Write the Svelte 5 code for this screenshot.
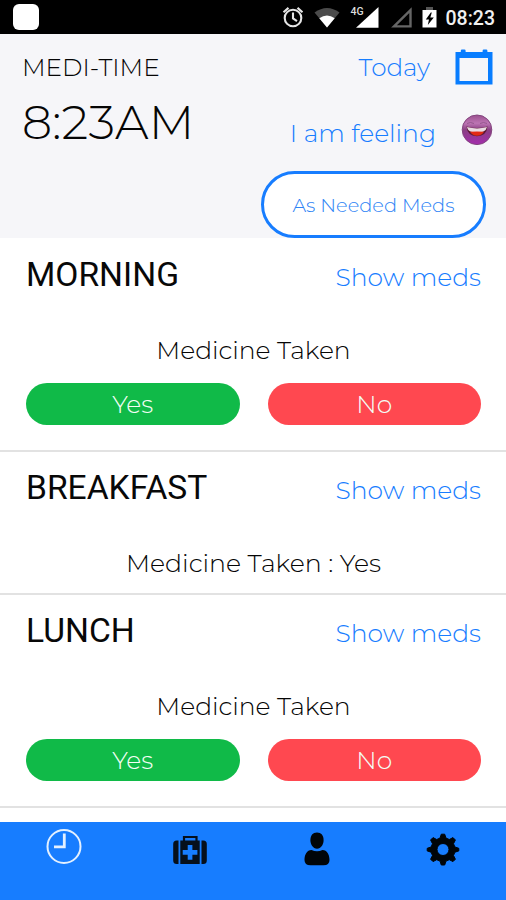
<script>
  const sections = [
    { name: 'MORNING', taken: null },
    { name: 'BREAKFAST', taken: 'Yes' },
    { name: 'LUNCH', taken: null }
  ];
</script>

<div class="screen">
  <div class="status">
    <span class="app-square"></span>
    <svg width="230" height="34" viewBox="276 0 230 34">
      <g fill="none" stroke="#e6e6e6" stroke-width="2.1">
        <circle cx="293" cy="18" r="8.3" />
        <path d="M293 12.5v6l4 2.6M283.5 12.2l5-4.3M302.5 12.2l-5-4.3" />
      </g>
      <path d="M314.5 12.5Q327 3.5 339.5 12.5L327 27.5Z" fill="#4b4b4b" />
      <path d="M319.3 18.3Q327 12.8 334.7 18.3L327 27.5Z" fill="#fff" />
      <text x="350.5" y="14.5" class="net">4G</text>
      <path d="M356 27.7L378.5 7V27.7Z" fill="#fff" />
      <path d="M394 26.4L410.5 10.2V26.4Z" fill="none" stroke="#666" stroke-width="2.4" />
      <path d="M426 7h7v3h-7z" fill="#555" />
      <path d="M422.5 10h14v17.5h-14z" fill="#fff" />
      <path d="M430.8 12.5l-5 7h3.2l-1.2 5.5 6-7.5h-3.5l1.5-5z" fill="#000" />
      <text x="445.5" y="25.3" class="clock" textLength="49.5" lengthAdjust="spacingAndGlyphs">08:23</text>
    </svg>
  </div>

  <header>
    <div class="now">
      <span class="title">MEDI-TIME</span>
      <span class="time">8:23AM</span>
    </div>
    <div class="actions">
      <div class="row">
        <span class="link today">Today</span>
        <svg width="38" height="36" viewBox="0 0 38 36">
          <path fill="#087dff" fill-rule="evenodd" d="M.5 3h5.3V1.700q0-1.200 1.200-1.200h2.400q1.200 0 1.200 1.200V3h17V1.700q0-1.200 1.200-1.200h2.400q1.200 0 1.200 1.200V3H37.5V35.500H.5V3ZM4.500 9V32H33V9Z" />
        </svg>
      </div>
      <div class="row feeling-row">
        <span class="link feeling">I am feeling</span>
        <svg width="32" height="32" viewBox="0 0 32 32">
          <defs>
            <linearGradient id="face" x1="0" y1="0" x2="0" y2="1">
              <stop offset="0" stop-color="#9b508f" />
              <stop offset=".28" stop-color="#bd75b4" />
              <stop offset=".5" stop-color="#8a3f83" />
              <stop offset="1" stop-color="#a42cae" />
            </linearGradient>
          </defs>
          <circle cx="16" cy="15.8" r="14.8" fill="url(#face)" stroke="#83457f" stroke-width="1" />
          <path d="M5.5 12.500Q16 15.500 26.500 12.500Q25.500 22 16 22.300Q6.500 22 5.500 12.500Z" fill="#5c1833" />
          <path d="M6 13Q16 15.800 26 13Q25.300 16.500 22 17.700Q16 18.800 10 17.700Q6.700 16.500 6 13Z" fill="#eadce3" />
          <path d="M9 17.800Q16 17 23 17.800Q20.500 21.700 16 21.700Q11.500 21.700 9 17.800Z" fill="#e32a14" />
          <path d="M6 9.500Q9.500 7.500 13 9.500M19 9.500Q22.500 7.500 26 9.500" fill="none" stroke="#96588f" stroke-width="1" />
        </svg>
      </div>
      <button class="needed"><span>As Needed Meds</span></button>
    </div>
  </header>

  <main>
    {#each sections as s}
      <section class:done={s.taken}>
        <div class="head">
          <h2>{s.name}</h2>
          <span class="link show">Show meds</span>
        </div>
        {#if s.taken}
          <p>Medicine Taken : {s.taken}</p>
        {:else}
          <p>Medicine Taken</p>
          <div class="choices">
            <button class="yes">Yes</button>
            <button class="no">No</button>
          </div>
        {/if}
      </section>
    {/each}
  </main>

  <nav>
    <div class="tab">
      <svg width="36" height="36" viewBox="0 0 36 36" fill="none" stroke="#e3f0ff">
        <circle cx="18" cy="17.500" r="16.500" stroke-width="2" />
        <path d="M18.300 4.500V17.800H8" stroke-width="2.800" />
      </svg>
    </div>
    <div class="tab low">
      <svg width="36" height="36" viewBox="0 0 36 36">
        <path d="M12 12V7h12.500V12" fill="none" stroke="#06101c" stroke-width="2.200" />
        <path fill="#06101c" fill-rule="evenodd" d="M8.300 10.500H27.700V34H8.300ZM15.700 15v5h-5v4.700h5v5h4.700v-5h5v-4.700h-5v-5Z" />
        <path fill="#06101c" d="M6.500 10.500H4.700Q1.200 10.500 1.200 14V30.500Q1.200 34 4.700 34H6.500ZM29.500 10.500h1.800q3.500 0 3.500 3.500V30.500q0 3.500-3.500 3.500h-1.800Z" />
      </svg>
    </div>
    <div class="tab low">
      <svg width="36" height="36" viewBox="0 0 36 36" fill="#000509">
        <path d="M18 2.500c4.300 0 6.600 3 6.600 7.600S22 18.700 18 18.700s-6.600-4-6.600-8.600S13.700 2.500 18 2.500Z" />
        <path d="M12.500 20Q18 22.500 23.500 20C28 20 30.500 24.500 30.500 30Q30.500 35.300 24.500 35.300H11.500Q5.500 35.300 5.500 30C5.500 24.500 8 20 12.500 20Z" />
      </svg>
    </div>
    <div class="tab low">
      <svg width="36" height="36" viewBox="0 0 36 36">
        <path fill="#000509" stroke="#000509" stroke-width="1" stroke-linejoin="round" fill-rule="evenodd" d="M16.300 4.200h3.400l1.300 3.900 3.300 1.400 3.700-1.900 2.400 2.400-1.900 3.700 1.400 3.300 3.900 1.300v2.600l-3.900 1.300-1.400 3.300 1.900 3.700-2.400 2.400-3.700-1.900-3.300 1.400-1.300 3.900h-3.400l-1.300-3.900-3.300-1.400-3.700 1.900-2.400-2.400 1.900-3.700-1.400-3.300-3.900-1.300v-2.600l3.900-1.300 1.400-3.300-1.900-3.700 2.400-2.400 3.700 1.900 3.300-1.400ZM18 13.500a6 6 0 1 0 0 12 6 6 0 1 0 0-12Z" />
      </svg>
    </div>
  </nav>
</div>

<style>
  :global(body) { margin: 0; }
  .screen {
    width: 506px;
    height: 900px;
    display: flex;
    flex-direction: column;
    overflow: hidden;
    background: #fff;
    color: #050505;
    font-family: Montserrat, Inter, "Liberation Sans", sans-serif;
    font-weight: 300;
    white-space: nowrap;
  }
  .status {
    flex: none;
    height: 34px;
    background: #000;
    display: flex;
    justify-content: space-between;
  }
  .app-square {
    width: 26px;
    height: 26px;
    margin: 4px 0 0 13px;
    border-radius: 6px;
    background: #fff;
  }
  .net { font: 500 10.500px Roboto, sans-serif; fill: #ddd; }
  .clock { font: 500 20px Roboto, sans-serif; fill: #f0f0f0; }
  header {
    flex: none;
    height: 204px;
    background: #f6f6f9;
    display: flex;
    justify-content: space-between;
  }
  .now { display: flex; flex-direction: column; padding: 18px 0 0 22px; }
  .title { font-size: 24.700px; line-height: 30px; }
  .time { font-size: 47.600px; line-height: 56px; margin-top: 12px; }
  .actions {
    display: flex;
    flex-direction: column;
    align-items: flex-end;
    padding-top: 15px;
  }
  .row { display: flex; height: 36px; padding-right: 13px; }
  .link { color: #177dff; font-size: 25px; line-height: 30px; }
  .today { margin: 3px 25px 0 0; font-size: 24.700px; }
  .feeling-row { margin-top: 29px; height: 32px; }
  .feeling { margin: 4px 25px 0 0; }
  button { font: inherit; padding: 0; border: 0; display: block; }
  .needed {
    box-sizing: border-box;
    width: 225px;
    height: 68px;
    margin: 25px 20px 0 0;
    border: 3.500px solid #177dff;
    border-radius: 34px;
    background: #fff;
    color: #2d83f5;
    font-size: 19.400px;
  }
  main { flex: 1; min-height: 0; overflow: hidden; }
  section {
    box-sizing: border-box;
    height: 213px;
    border-bottom: 2px solid #e2e2e2;
    padding: 16px 25px 0 26px;
  }
  section:first-child { height: 214px; padding-top: 17px; }
  section:first-child p { margin-top: 40px; }
  section.done { height: 143px; }
  .head { display: flex; justify-content: space-between; height: 40px; }
  h2 {
    margin: 0;
    font: 400 33.600px/40px Roboto, sans-serif;
    color: #080808;
  }
  .show { margin-top: 7px; }
  p { margin: 40px 0 0; text-align: center; font-size: 25px; line-height: 30px; }
  .done p { font-size: 25.200px; }
  .choices { display: flex; gap: 28px; margin-top: 18px; }
  .choices button {
    flex: 1;
    height: 42px;
    border-radius: 21px;
    color: #f4fff6;
    font-size: 25px;
    line-height: 42px;
  }
  .yes { background: #10ba48; }
  .no { background: #ff4850; }
  nav {
    flex: none;
    height: 78px;
    background: #177dff;
    display: flex;
  }
  .tab { flex: 1; display: flex; justify-content: center; padding: 7px 0 0 1px; }
  .low { padding-top: 8px; }
</style>
